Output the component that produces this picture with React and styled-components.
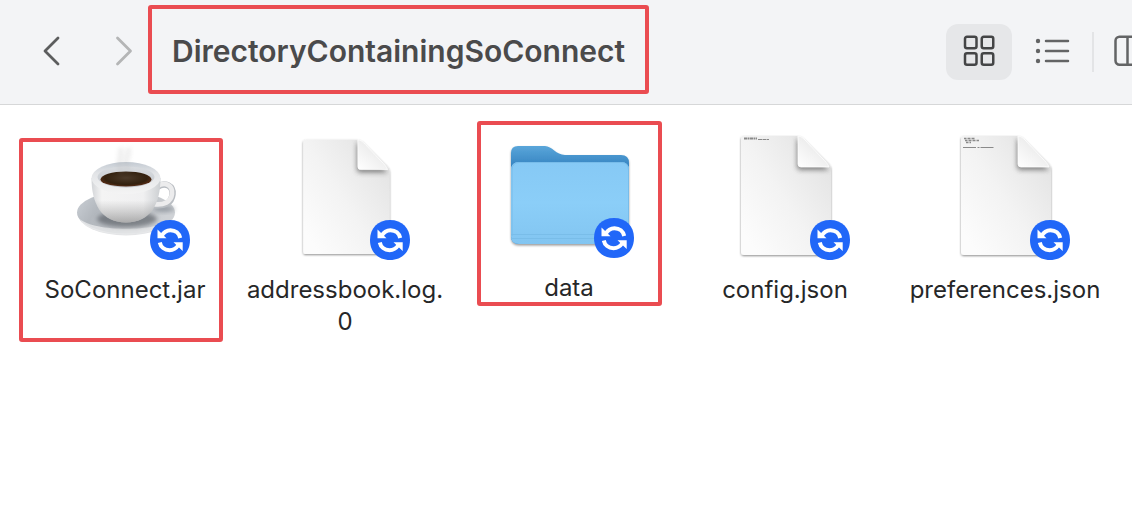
import React from "react";
import styled, { createGlobalStyle } from "styled-components";

const GlobalStyle = createGlobalStyle`
  * { box-sizing: border-box; }
  body {
    margin: 0;
    background: #ffffff;
    color: #262728;
    font-family: Inter, "Liberation Sans", sans-serif;
    overflow-x: hidden;
  }
`;

const Toolbar = styled.header`
  display: flex;
  align-items: center;
  height: 105px;
  padding-left: 36px;
  background: #f3f4f6;
  border-bottom: 1px solid #d6d7d8;
  overflow: hidden;
`;

const IconButton = styled.button`
  display: flex;
  flex: none;
  align-items: center;
  justify-content: center;
  width: ${(p) => p.$width}px;
  height: 56px;
  padding: 0;
  border: 0;
  border-radius: 12px;
  background: ${(p) => (p.$active ? "#e6e7e9" : "transparent")};
  color: ${(p) => p.$color};
`;

const NavGroup = styled.nav`
  display: flex;
  flex: none;
  gap: 40px;
  width: 112px;
`;

const outline = "4px solid #ea4c51";

const Title = styled.h1`
  flex: none;
  height: 89px;
  margin: 0 0 5px;
  padding: 0 20px;
  border: ${outline};
  border-radius: 3px;
  color: #4a4a4b;
  font-size: 30px;
  font-weight: 600;
  line-height: 84px;
`;

const ViewGroup = styled.div`
  display: flex;
  flex: none;
  align-items: center;
  gap: 8px;
  margin-left: auto;
  margin-right: -34px;
`;

const Separator = styled.span`
  width: 2px;
  height: 40px;
  background: #e3e4e6;
`;

const Files = styled.main`
  display: grid;
  grid-template-columns: 220fr 220fr 228fr 204fr 236fr;
  align-items: start;
  padding: 27px 9px 27px 15px;
`;

const Tile = styled.figure`
  position: relative;
  display: flex;
  flex-direction: column;
  align-items: center;
  margin: 0;
`;

const Art = styled.div`
  position: relative;
  width: 130px;
  height: ${(p) => p.$height}px;
`;

const Badge = styled.svg`
  position: absolute;
  right: 0;
  bottom: 0;
`;

const Name = styled.figcaption`
  width: 204px;
  margin-top: 14px;
  font-size: 24px;
  line-height: 32px;
  text-align: center;
  overflow-wrap: anywhere;
`;

const Highlight = styled.span`
  position: absolute;
  top: ${(p) => p.$top}px;
  left: ${(p) => p.$left}px;
  width: ${(p) => p.$width}px;
  height: ${(p) => p.$height}px;
  border: ${outline};
  border-radius: 3px;
`;

function SyncBadge() {
  return (
    <Badge width="40" height="40" viewBox="0 0 40 40" aria-hidden="true">
      <path d="M20 0C32 0 40 8 40 20S32 40 20 40 0 32 0 20 8 0 20 0Z" fill="#2167f8" />
      <g fill="none" stroke="#fff" strokeWidth="4">
        <path d="M11.500 16C14 11.500 17 10.200 20.500 10.200C25.500 10.200 29.300 13.500 30.200 18" />
        <path d="M9.800 22.500C10.700 27 14.500 30.200 19.500 30.200C23 30.200 26 28.700 28.500 25" />
      </g>
      <path d="M7.500 9.500V18.200H16.500ZM32.700 31V22.300H23.500Z" fill="#fff" />
    </Badge>
  );
}

function CoffeeArt() {
  return (
    <svg width="130" height="128" viewBox="60 132 130 128" aria-hidden="true">
      <defs>
        <linearGradient id="saucer" x1="0" y1="0" x2="1" y2="0.300">
          <stop offset="0" stopColor="#cdd2d8" /><stop offset="0.300" stopColor="#b3b8be" /><stop offset="0.700" stopColor="#bfc2c6" /><stop offset="1" stopColor="#cfd2d6" />
        </linearGradient>
        <linearGradient id="cup" x1="0" y1="0" x2="1" y2="0">
          <stop offset="0" stopColor="#d3d5d8" /><stop offset="0.150" stopColor="#f4f4f4" /><stop offset="0.750" stopColor="#f0f0f1" /><stop offset="1" stopColor="#cccfd2" />
        </linearGradient>
        <linearGradient id="cupshade" x1="0" y1="0" x2="0" y2="1">
          <stop offset="0.500" stopColor="#777" stopOpacity="0" /><stop offset="1" stopColor="#666" stopOpacity="0.500" />
        </linearGradient>
        <linearGradient id="rim" x1="0" y1="0" x2="0" y2="1">
          <stop offset="0" stopColor="#c3cad2" /><stop offset="0.350" stopColor="#e2e4e7" /><stop offset="1" stopColor="#f4f4f4" />
        </linearGradient>
        <linearGradient id="cupinside" x1="0" y1="0" x2="0" y2="1">
          <stop offset="0" stopColor="#d9dce0" /><stop offset="1" stopColor="#c3c8ce" />
        </linearGradient>
        <radialGradient id="coffee" cx="0.500" cy="0.400" r="0.550">
          <stop offset="0" stopColor="#4b3a29" /><stop offset="0.750" stopColor="#33210f" /><stop offset="1" stopColor="#5a2c14" />
        </radialGradient>
        <clipPath id="cupopening"><ellipse cx="126" cy="177" rx="28.500" ry="9.500" /></clipPath>
        <filter id="soft" x="-50%" y="-50%" width="200%" height="200%"><feGaussianBlur stdDeviation="2" /></filter>
      </defs>
      <ellipse cx="126" cy="214" rx="48" ry="21.500" fill="#e4e5e7" />
      <ellipse cx="126" cy="212.500" rx="49" ry="21" fill="url(#saucer)" />
      <path d="M80 219C90 239 158 240 172 219C158 232 94 232 80 219Z" fill="#e9eaeb" opacity="0.800" />
      <ellipse cx="127" cy="219" rx="30" ry="8" fill="#4f545b" opacity="0.600" filter="url(#soft)" />
      <ellipse cx="164" cy="209" rx="11" ry="3" fill="#6d7680" opacity="0.550" filter="url(#soft)" />
      <path d="M157 187C165 181.500 173.500 185.500 172.500 194.500C171.500 203 165 206.500 153 205" fill="none" stroke="#b9bdc2" strokeWidth="6.500" />
      <path d="M157 186.500C165 181 173 185 172 194C171 202 164 205.500 153 204" fill="none" stroke="#ececed" strokeWidth="4.800" />
      <path d="M91.500 178C91.500 203 101 222.500 126 222.500S160.500 203 160.500 178Z" fill="url(#cup)" />
      <path d="M91.500 178C91.500 203 101 222.500 126 222.500S160.500 203 160.500 178Z" fill="url(#cupshade)" />
      <ellipse cx="126" cy="178" rx="34.500" ry="16" fill="url(#rim)" />
      <ellipse cx="126" cy="177" rx="28.500" ry="10.500" fill="url(#cupinside)" />
      <ellipse cx="126" cy="179.500" rx="25.500" ry="8" fill="url(#coffee)" clipPath="url(#cupopening)" />
      <g fill="none" stroke="#b5b5b5" strokeWidth="5" opacity="0.240" filter="url(#soft)">
        <path d="M122 172C115 162 124 157 120 148" /><path d="M129 171C122 160 131 155 128 148" />
      </g>
    </svg>
  );
}

function FolderArt() {
  return (
    <svg width="130" height="126" viewBox="504 132 130 126" aria-hidden="true">
      <defs>
        <linearGradient id="folderback" x1="0" y1="0" x2="0" y2="1">
          <stop offset="0" stopColor="#5aa6da" /><stop offset="0.200" stopColor="#3785c2" /><stop offset="1" stopColor="#3785c2" />
        </linearGradient>
        <linearGradient id="folderfront" x1="0" y1="0" x2="0" y2="1">
          <stop offset="0" stopColor="#86c9f5" /><stop offset="0.500" stopColor="#8bcef8" /><stop offset="1" stopColor="#82c5f1" />
        </linearGradient>
        <filter id="foldershadow" x="-10%" y="-10%" width="120%" height="125%"><feDropShadow dx="0" dy="1.500" stdDeviation="1" floodOpacity="0.400" /></filter>
      </defs>
      <path d="M511 153Q511 146 518 146H545C552 146 556 155 565 155H621Q629 155 629 163V237Q629 244 621 244H519Q511 244 511 236Z" fill="url(#folderback)" filter="url(#foldershadow)" />
      <path d="M511 170Q511 162 519 162H621Q629 162 629 170V236Q629 244 621 244H519Q511 244 511 236Z" fill="url(#folderfront)" />
      <path d="M512 236V170Q512 162.500 519 162.500H621Q628.500 162.500 628.500 170V236" fill="none" stroke="#78bce9" />
      <path d="M511 234.500H629M511 238.500H629" stroke="#79bde9" />
    </svg>
  );
}

function DocumentArt({ id, small, preview }) {
  return (
    <svg width="130" height="128" viewBox="0 0 130 128" aria-hidden="true">
      <defs>
        <linearGradient id={id + "page"} x1="0.100" y1="0.900" x2="0.900" y2="0.200">
          <stop offset="0" stopColor="#fcfcfc" /><stop offset="0.500" stopColor="#f3f3f3" /><stop offset="1" stopColor="#e5e5e5" />
        </linearGradient>
        <linearGradient id={id + "fold"} x1="0" y1="1" x2="0.600" y2="0.300">
          <stop offset="0" stopColor="#ffffff" /><stop offset="1" stopColor="#ebebeb" />
        </linearGradient>
        <filter id={id + "shadow"} x="-10%" y="-10%" width="120%" height="120%"><feDropShadow dx="0" dy="1" stdDeviation="1" floodOpacity="0.450" /></filter>
        <filter id={id + "soft"} x="-50%" y="-50%" width="200%" height="200%"><feGaussianBlur stdDeviation="2.500" /></filter>
        <clipPath id={id + "clip"}><path d="M21 4H79L111 36V123H21Z" /></clipPath>
      </defs>
      <g transform={small ? "translate(3 4) scale(0.960)" : undefined}>
        <path d="M21 7Q21 4 24 4H77C81 4 83 6 85 8L107 30C110 33 111 34 111 38V120Q111 123 108 123H24Q21 123 21 120Z" fill={`url(#${id}page)`} filter={`url(#${id}shadow)`} />
        <g clipPath={`url(#${id}clip)`}>
          <path d="M77 6V34Q77 38 81 38H109L90 18Z" fill="#555" opacity="0.700" filter={`url(#${id}soft)`} />
        </g>
        <path d="M78 4V32Q78 35 81 35H109C108 32 105 29 103 27L86 9C83 6 81 4 78 4Z" fill={`url(#${id}fold)`} stroke="#fff" strokeWidth="0.800" />
        {preview}
      </g>
    </svg>
  );
}

const configPreview = (
  <g fill="none" stroke="#8a8a8a">
    <path d="M24 6.500H37" strokeWidth="2" strokeDasharray="3 .5 2 .5" />
    <path d="M38 7.500H49" strokeWidth="1" strokeDasharray="4 .5" />
  </g>
);

const preferencesPreview = (
  <g fill="none" stroke="#8a8a8a">
    <path d="M24 6.500H35M25 8.500H39M26 10.500H31" strokeWidth="1.500" strokeDasharray="2 .5 1 .5" />
    <path d="M23 15.500H54" strokeWidth="1" strokeDasharray="13 1.500 2 1" />
  </g>
);

const files = [
  { name: "SoConnect.jar", art: <CoffeeArt />, height: 128, mark: { $top: 6, $left: 4, $width: 204, $height: 204 } },
  { name: "addressbook.log.0", art: <DocumentArt id="log" small />, height: 128 },
  { name: "data", art: <FolderArt />, height: 126, mark: { $top: -11, $left: 22, $width: 185, $height: 185 } },
  { name: "config.json", art: <DocumentArt id="config" preview={configPreview} />, height: 128 },
  { name: "preferences.json", art: <DocumentArt id="preferences" preview={preferencesPreview} />, height: 128 },
];

export default function App() {
  return (
    <>
      <GlobalStyle />
      <Toolbar>
        <NavGroup>
          <IconButton $width={32} $color="#5c5d5e" aria-label="Back">
            <svg width="20" height="32" viewBox="0 0 20 32" fill="none" stroke="currentColor" strokeWidth="2.800" strokeLinecap="round" strokeLinejoin="round"><path d="M16 2L3 15L16 28" /></svg>
          </IconButton>
          <IconButton $width={32} $color="#b4b5b6" aria-label="Forward">
            <svg width="20" height="32" viewBox="0 0 20 32" fill="none" stroke="currentColor" strokeWidth="2.800" strokeLinecap="round" strokeLinejoin="round"><path d="M3.500 2L16.500 15L3.500 28" /></svg>
          </IconButton>
        </NavGroup>
        <Title>DirectoryContainingSoConnect</Title>
        <ViewGroup>
          <IconButton $width={66} $active $color="#444546" aria-label="Icon view">
            <svg width="32" height="34" viewBox="0 0 32 34" fill="none" stroke="currentColor" strokeWidth="2.500">
              <rect x="2" y="1.750" width="11.500" height="11.500" rx="2" /><rect x="18.750" y="1.750" width="11.500" height="11.500" rx="2" />
              <rect x="2" y="18.250" width="11.500" height="11.500" rx="2" /><rect x="18.750" y="18.250" width="11.500" height="11.500" rx="2" />
            </svg>
          </IconButton>
          <IconButton $width={64} $color="#636465" aria-label="List view">
            <svg width="36" height="28" viewBox="0 0 36 28" fill="none" stroke="currentColor" strokeWidth="2.500" strokeLinecap="round">
              <path d="M12 3H34M12 13H34M12 23H34" />
              <g fill="currentColor" stroke="none"><circle cx="4" cy="3" r="2.200" /><circle cx="4" cy="13" r="2.200" /><circle cx="4" cy="23" r="2.200" /></g>
            </svg>
          </IconButton>
          <Separator />
          <IconButton $width={64} $color="#636465" aria-label="Column view">
            <svg width="40" height="34" viewBox="0 0 40 34" fill="none" stroke="currentColor" strokeWidth="2.500"><rect x="1.500" y="1.750" width="37" height="28" rx="4" /><path d="M13.500 2V30M26.500 2V30" /></svg>
          </IconButton>
        </ViewGroup>
      </Toolbar>
      <Files>
        {files.map((file) => (
          <Tile key={file.name}>
            <Art $height={file.height}>
              {file.art}
              <SyncBadge />
            </Art>
            <Name>{file.name}</Name>
            {file.mark && <Highlight {...file.mark} />}
          </Tile>
        ))}
      </Files>
    </>
  );
}
